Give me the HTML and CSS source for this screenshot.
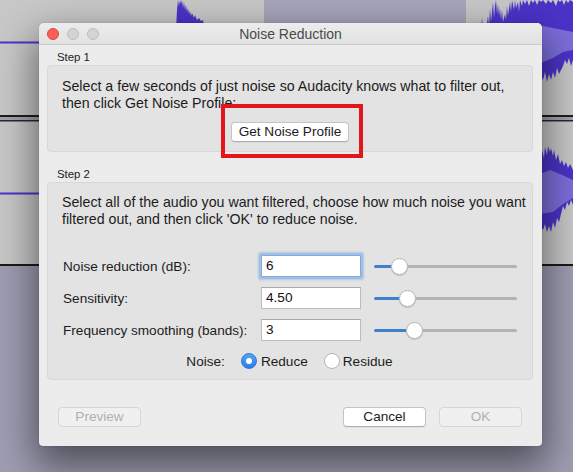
FILE: index.html
```html
<!DOCTYPE html>
<html>
<head>
<meta charset="utf-8">
<title>Noise Reduction</title>
<link rel="stylesheet" href="styles.css">
</head>
<body>
<div class="desk">
  <svg class="bg" width="573" height="472" viewBox="0 0 573 472" xmlns="http://www.w3.org/2000/svg">
    <rect x="0" y="0" width="573" height="266" fill="#c8c8c8"/>
    <rect x="264" y="0" width="202" height="266" fill="#a6a5ba"/>
    <rect x="0" y="266" width="573" height="206" fill="#9e9db2"/>
    <rect x="0" y="115" width="573" height="2" fill="#1e1e1e"/>
    <rect x="0" y="117" width="573" height="3" fill="#a3a2b4"/>
    <rect x="0" y="120" width="573" height="1.5" fill="#2a2a2a"/>
    <rect x="0" y="264" width="573" height="2" fill="#1a1a1a"/>
    <rect x="0" y="41.5" width="40" height="2" fill="#4b33c9"/>
    <rect x="0" y="192.5" width="40" height="2" fill="#4b33c9"/>
    <path fill="#4b33c9" d="M176,30 L177,10 L178,0 L179,6 L180,0 L181,4 L182,0 L183,8 L184,2 L185,10 L186,5 L187,12 L188,8 L189,14 L190,11 L191,16 L192,13 L194,18 L195,15 L197,20 L199,18 L201,21 L203,20 L205,30 Z"/>
    <path fill="#4b33c9" d="M478,42 L479,30 L480,22 L481,32 L482,18 L483,28 L485,24 L486,30 L488,16 L489,26 L490,8 L491,22 L492,12 L493,2 L494,18 L495,6 L496,0 L497,14 L498,4 L499,16 L500,8 L501,20 L502,10 L503,22 L505,14 L506,20 L507,6 L508,16 L510,2 L511,12 L512,0 L514,10 L515,0 L516,8 L518,2 L519,12 L520,0 L522,6 L523,0 L525,4 L527,0 L529,6 L531,0 L533,3 L535,0 L537,5 L539,0 L541,2 L543,0 L546,4 L548,0 L551,3 L553,0 L556,6 L558,0 L560,2 L562,0 L564,5 L566,0 L568,3 L570,0 L573,2 L573,60 L571,66 L569,58 L567,64 L565,60 L563,66 L561,70 L559,74 L557,68 L555,78 L553,72 L551,80 L549,74 L547,82 L545,72 L543,80 L541,76 L539,84 L537,72 L535,80 L533,70 L531,78 L529,66 L527,76 L525,64 L523,72 L521,60 L519,70 L517,62 L515,74 L513,60 L511,68 L509,58 L507,66 L505,56 L503,64 L501,58 L499,62 L497,54 L495,60 L493,56 L491,66 L489,54 L487,58 L485,52 L483,56 L481,50 L479,54 Z"/>
    <path fill="#7c6fdc" d="M480,42 L490,34 L500,31 L510,29 L520,27 L530,26 L543,26 L553,28 L563,30 L573,32 L573,50 L563,52 L553,58 L543,62 L530,58 L520,56 L510,54 L500,52 L490,50 L480,44 Z"/>
    <path fill="#4b33c9" d="M520,193 L522,160 L530,152 L540,160 L542,150 L544,158 L545,147 L547,155 L548,146 L550,152 L551,148 L553,156 L554,150 L556,160 L558,154 L560,164 L562,160 L564,166 L566,162 L568,168 L570,164 L573,170 L573,205 L571,200 L569,206 L567,202 L565,210 L563,206 L561,214 L559,222 L557,218 L555,228 L553,222 L551,232 L549,226 L547,232 L545,224 L543,230 L540,226 L530,228 L522,222 Z"/>
    <path fill="#7c6fdc" d="M540,174 L550,170 L560,174 L573,180 L573,198 L563,204 L553,212 L540,214 Z"/>
  </svg>

  <div class="window">
    <div class="titlebar">
      <div class="lights">
        <span class="light close"></span>
        <span class="light"></span>
        <span class="light"></span>
      </div>
      <div class="title">Noise Reduction</div>
      <div></div>
    </div>

    <div class="content">
      <div class="step">Step 1</div>
      <div class="group g1">
        <p>Select a few seconds of just noise so Audacity knows what to filter out,<br>then click Get Noise Profile:</p>
        <div class="center">
          <span class="mark"><button class="btn profile">Get Noise Profile</button></span>
        </div>
      </div>

      <div class="step step2">Step 2</div>
      <div class="group g2">
        <p>Select all of the audio you want filtered, choose how much noise you want<br>filtered out, and then click 'OK' to reduce noise.</p>

        <div class="row">
          <span class="label">Noise reduction (dB):</span>
          <span class="field focus">6</span>
          <span class="slider"><span class="fill" style="width:17px"></span><span class="thumb"></span><span class="rest"></span></span>
        </div>
        <div class="row">
          <span class="label">Sensitivity:</span>
          <span class="field">4.50</span>
          <span class="slider"><span class="fill" style="width:25px"></span><span class="thumb"></span><span class="rest"></span></span>
        </div>
        <div class="row">
          <span class="label">Frequency smoothing (bands):</span>
          <span class="field">3</span>
          <span class="slider"><span class="fill" style="width:32px"></span><span class="thumb"></span><span class="rest"></span></span>
        </div>

        <div class="noise-row">
          <span class="noise-label">Noise:</span>
          <span class="radio on"></span><span class="opt">Reduce</span>
          <span class="radio"></span><span class="opt last">Residue</span>
        </div>
      </div>

      <div class="footer">
        <button class="btn wide disabled">Preview</button>
        <span class="spacer"></span>
        <button class="btn wide">Cancel</button>
        <button class="btn wide disabled">OK</button>
      </div>
    </div>
  </div>
</div>
</body>
</html>
```

FILE: styles.css
```css
* { box-sizing: border-box; }

html, body {
  margin: 0;
  padding: 0;
}

body {
  width: 573px;
  height: 472px;
  overflow: hidden;
  font-family: "Liberation Sans", Arial, sans-serif;
  font-size: 13.6px;
  color: #1c1c1c;
}

.desk {
  position: relative;
  width: 573px;
  height: 472px;
  padding: 23px 0 0 39px;
}

.bg {
  position: absolute;
  left: 0;
  top: 0;
}

.window {
  position: relative;
  width: 503px;
  background: #ececec;
  border-radius: 5px 5px 4px 4px;
  box-shadow: 0 16px 38px 4px rgba(0, 0, 0, 0.5), 0 0 1px rgba(0, 0, 0, 0.45);
}

.titlebar {
  height: 22px;
  display: grid;
  grid-template-columns: 1fr auto 1fr;
  align-items: center;
  background: linear-gradient(#ececec, #e2e2e2);
  border-bottom: 1px solid #cbcbcb;
  border-radius: 5px 5px 0 0;
}

.lights {
  display: flex;
  gap: 8px;
  padding-left: 8px;
}

.light {
  width: 12px;
  height: 12px;
  border-radius: 50%;
  background: #d4d4d4;
  border: 1px solid #bdbdbd;
}

.light.close {
  background: #fc5f5a;
  border-color: #de4640;
}

.title {
  font-size: 14px;
  color: #4a4a4a;
  line-height: 16px;
}

.content {
  padding: 0 9px 19px 8px;
}

.step {
  font-size: 11.4px;
  line-height: 14px;
  padding-left: 10px;
  margin-top: 5px;
  margin-bottom: 1px;
  color: #222;
}

.step2 {
  margin-top: 15px;
}

.group {
  background: #e3e3e3;
  border: 1px solid #d8d8d8;
  border-radius: 4px;
}

.group p {
  margin: 0;
  font-size: 14.2px;
  line-height: 17px;
  white-space: nowrap;
}

.g1 {
  padding: 12px 14px 9px;
}

.center {
  display: flex;
  justify-content: center;
  margin-top: 10px;
}

.mark {
  position: relative;
  display: block;
}

.mark::after {
  content: "";
  position: absolute;
  left: -10px;
  right: -14px;
  top: -18px;
  bottom: -16px;
  border: 4px solid #e3161c;
}

.btn {
  display: block;
  height: 20px;
  padding: 0;
  font-family: inherit;
  font-size: 13.6px;
  line-height: 18px;
  color: #1c1c1c;
  background: #ffffff;
  border: 1px solid #c4c4c4;
  border-bottom-color: #aeaeae;
  border-radius: 4px;
  box-shadow: 0 1px 0 rgba(0, 0, 0, 0.04);
}

.profile {
  width: 118px;
}

.g2 {
  padding: 11px 15px 5px 14px;
}

.g2 p {
  margin-bottom: 22px;
}

.row {
  display: flex;
  align-items: center;
  height: 32px;
}

.label {
  width: 199px;
  padding-left: 1px;
}

.field {
  width: 100px;
  height: 22px;
  background: #fff;
  border: 1px solid #bcbcbc;
  border-top-color: #a9a9a9;
  padding-left: 4px;
  line-height: 20px;
  color: #111;
}

.field.focus {
  border-color: #86a9d2;
  box-shadow: 0 0 0 2px #9cc0ea, 0 0 2px 3px rgba(120, 165, 225, 0.45);
  border-radius: 1px;
}

.slider {
  display: flex;
  align-items: center;
  width: 143px;
  margin-left: 13px;
}

.fill {
  height: 3px;
  background: #3f80cc;
  border-radius: 2px 0 0 2px;
}

.rest {
  flex: 1;
  height: 3px;
  background: #b3b3b3;
  border-radius: 0 2px 2px 0;
}

.thumb {
  width: 17px;
  height: 17px;
  border-radius: 50%;
  background: #fff;
  border: 1px solid #b6b6b6;
  box-shadow: 0 1px 1px rgba(0, 0, 0, 0.15);
}

.noise-row {
  display: flex;
  justify-content: center;
  align-items: center;
  height: 26px;
  margin-top: 2px;
}

.noise-label {
  margin-right: 16px;
}

.radio {
  width: 16px;
  height: 16px;
  border-radius: 50%;
  background: #fff;
  border: 1px solid #b5b5b5;
  margin-right: 3px;
  display: flex;
  align-items: center;
  justify-content: center;
}

.radio.on {
  background: linear-gradient(#5aa3f6, #2b7ee6);
  border-color: #2f79d6;
  margin-right: 4px;
}

.radio.on::after {
  content: "";
  width: 6px;
  height: 6px;
  border-radius: 50%;
  background: #fff;
}

.opt {
  margin-right: 16px;
}

.opt.last {
  margin-right: 0;
}

.footer {
  display: flex;
  align-items: center;
  gap: 13px;
  margin-top: 27px;
  padding: 0 11px;
}

.spacer {
  flex: 1;
}

.wide {
  width: 83px;
}

.btn.disabled {
  background: #f0f0f0;
  border-color: #d6d6d6;
  color: #b0b0b0;
  box-shadow: none;
}
```
